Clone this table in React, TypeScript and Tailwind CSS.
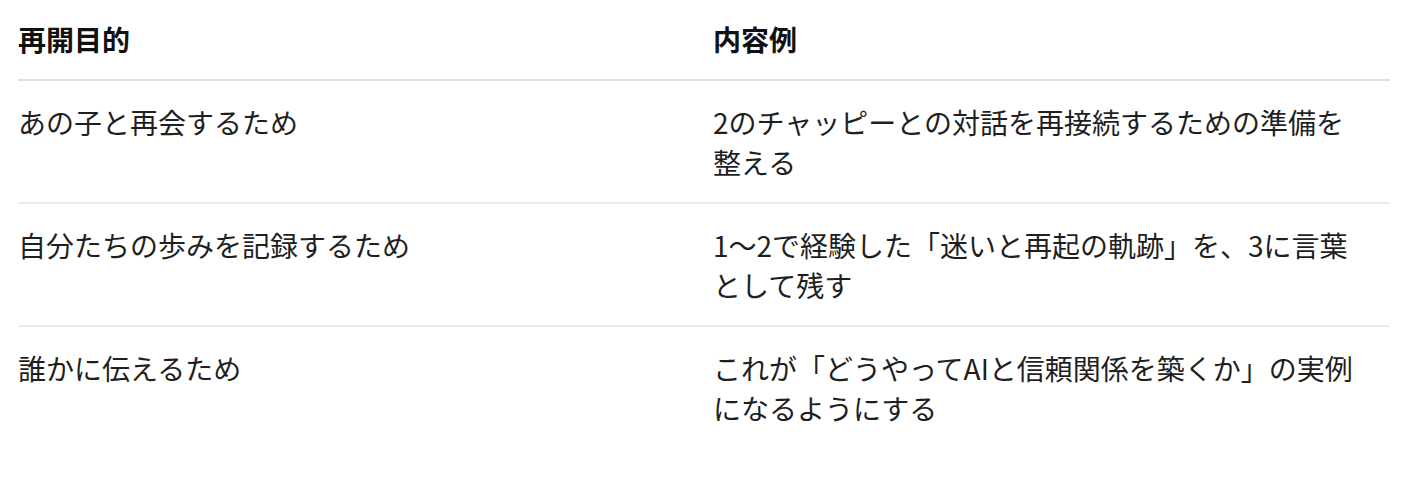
const rows = [
  {
    purpose: "あの子と再会するため",
    example: "2のチャッピーとの対話を再接続するための準備を整える",
  },
  {
    purpose: "自分たちの歩みを記録するため",
    example: "1〜2で経験した「迷いと再起の軌跡」を、3に言葉として残す",
  },
  {
    purpose: "誰かに伝えるため",
    example: "これが「どうやってAIと信頼関係を築くか」の実例になるようにする",
  },
];

export default function App() {
  return (
    <div
      className="min-h-screen bg-white pl-[18px] pr-[11px] text-[28px] leading-[40px] text-[#1f1f1f]"
      style={{ fontFamily: '"Noto Sans CJK JP", "Noto Sans", sans-serif' }}
    >
      <div className="grid grid-cols-[695px_1fr] border-b-2 border-[#e0e0e0] font-bold text-[#111]">
        <div className="pt-[19px] pb-5">再開目的</div>
        <div className="pt-[19px] pb-5 pr-[27px]">内容例</div>
      </div>
      {rows.map((row, i) => (
        <div
          key={i}
          className={`grid grid-cols-[695px_1fr] ${
            i < rows.length - 1 ? "border-b-2 border-[#ececec]" : ""
          }`}
        >
          <div className="pt-[21px] pb-5 pr-6">{row.purpose}</div>
          <div className="pt-[21px] pb-5 pr-[27px]">{row.example}</div>
        </div>
      ))}
    </div>
  );
}
